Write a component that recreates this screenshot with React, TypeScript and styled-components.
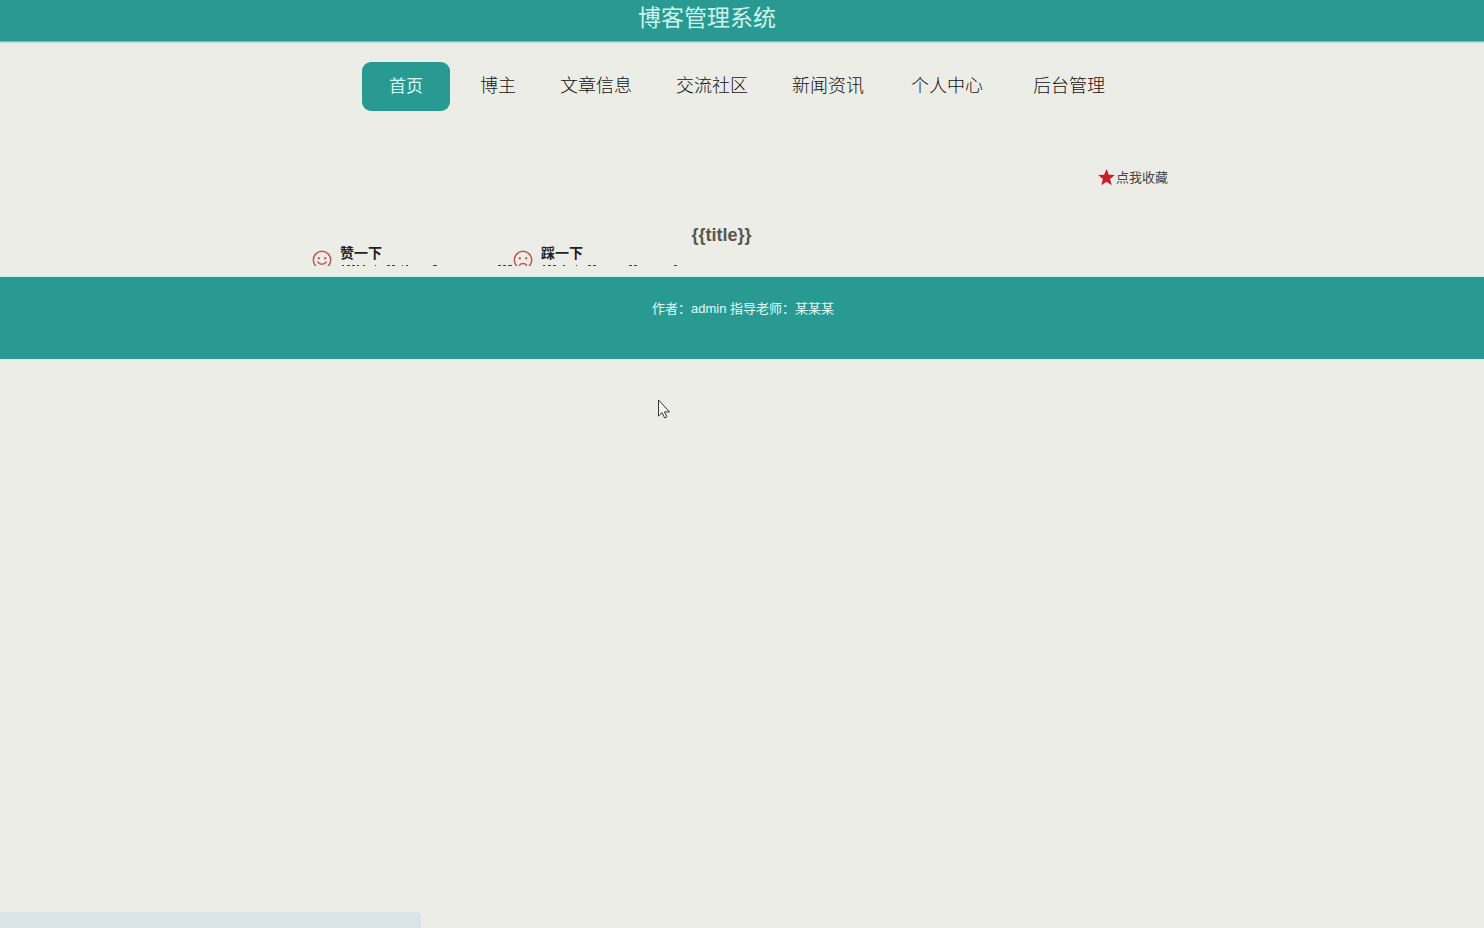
import React from "react";
import styled, { createGlobalStyle } from "styled-components";

const teal = "#299a92";
const sans = '"Liberation Sans", "Noto Sans CJK SC", sans-serif';

const GlobalStyle = createGlobalStyle`
  * { box-sizing: border-box; }
  body { margin: 0; background: #edede8; font-family: ${sans}; color: #222; }
`;
const Page = styled.div`
  min-height: 100vh;
  display: flex;
  flex-direction: column;
  overflow: hidden;
`;
const Header = styled.header`
  height: 42px;
  padding-right: 70px;
  background: ${teal};
  border-bottom: 1px solid #7fbab4;
  box-shadow: 0 1px 1px #c4dfda;
  text-align: center;
`;
const SiteName = styled.h1`
  margin: 0;
  font-size: 23px;
  line-height: 37px;
  font-weight: 400;
  color: #cdf5f0;
`;
const Nav = styled.nav`
  padding: 20px 0 0 8px;
`;
const Menu = styled.ul`
  display: flex;
  justify-content: center;
  margin: 0;
  padding: 0;
  list-style: none;
`;
const MenuItem = styled.li<{ $wide?: boolean; $first?: boolean }>`
  padding: ${(p) => (p.$first ? "0 8px 0 0" : p.$wide ? "0 25px" : "0 22px")};
`;
const MenuLink = styled.a<{ $active?: boolean }>`
  display: block;
  padding: ${(p) => (p.$active ? "0 27px" : "0")};
  border-radius: 9px;
  background: ${(p) => (p.$active ? teal : "transparent")};
  color: ${(p) => (p.$active ? "#d8f8f4" : "#111")};
  font-size: ${(p) => (p.$active ? 17 : 18)}px;
  font-weight: ${(p) => (p.$active ? 400 : 300)};
  line-height: 49px;
  text-decoration: none;
`;
const Article = styled.main`
  width: 100%;
  max-width: 860px;
  margin: 0 auto;
  padding-top: 55px;
`;
const Toolbar = styled.div`
  display: flex;
  justify-content: flex-end;
  padding-right: 4px;
`;
const Favourite = styled.button`
  display: flex;
  align-items: center;
  gap: 1px;
  padding: 0;
  border: 0;
  background: none;
  font-family: inherit;
  font-size: 13px;
  line-height: 24px;
  color: #444;
`;
const Title = styled.h2`
  margin: 0;
  padding: 35px 41px 0 0;
  text-align: center;
  font-size: 18px;
  line-height: 20px;
  color: #55584f;
`;
const Votes = styled.div`
  display: flex;
  height: 21px;
  margin-bottom: 11px;
  overflow: hidden;
`;
const Vote = styled.button`
  position: relative;
  display: flex;
  align-items: flex-start;
  gap: 8px;
  width: 201px;
  padding: 0;
  border: 0;
  background: none;
  font-family: inherit;
  font-size: 14px;
  font-weight: 700;
  line-height: 16px;
  color: #222;
`;
const Face = styled.svg`
  flex: none;
  margin-top: 5px;
`;
const Traces = styled.svg`
  position: absolute;
  left: 0;
  top: 20px;
`;
const Footer = styled.footer`
  height: 82px;
  padding: 20px 0 0 2px;
  background: ${teal};
  box-shadow: 0 -1px 1px #c9efea, 0 1px 1px #c9efea;
  color: #e4fbf8;
  text-align: center;
  font-size: 13px;
  line-height: 23px;
`;
const StatusBubble = styled.div`
  position: fixed;
  left: 0;
  bottom: 0;
  width: 421px;
  height: 16px;
  border-radius: 0 5px 0 0;
  background: #dbe4e9;
`;
const Pointer = styled.svg`
  position: fixed;
  left: 657px;
  top: 399px;
`;

const menu = [
  { label: "首页", active: true },
  { label: "博主" },
  { label: "文章信息" },
  { label: "交流社区" },
  { label: "新闻资讯" },
  { label: "个人中心", wide: true },
  { label: "后台管理", wide: true },
];

const FaceIcon = ({ happy }: { happy?: boolean }) => (
  <Face width="20" height="20" viewBox="0 0 20 20" fill="none" stroke="#c2575a" strokeWidth="1.5" strokeLinecap="round" aria-hidden="true">
    <circle cx="10" cy="10" r="8.7" />
    <path d={happy ? "M5.8 12c2 2.9 6.4 2.9 8.4 0" : "M6.5 15.2c1.6-2.2 5.4-2.2 7 0"} />
    <path d="M6.8 8.2v.3M13.2 8.2v.3" strokeWidth="2.2" />
  </Face>
);

const VoteButton = ({ label, happy, traces }: { label: string; happy?: boolean; traces: string }) => (
  <Vote type="button">
    <FaceIcon happy={happy} />
    {label}
    <Traces width="201" height="2" viewBox="0 0 201 2" stroke="#444" aria-hidden="true">
      <path d={traces} />
    </Traces>
  </Vote>
);

export default function App() {
  return (
    <Page>
      <GlobalStyle />
      <Header><SiteName>博客管理系统</SiteName></Header>
      <Nav>
        <Menu>
          {menu.map((m) => (
            <MenuItem key={m.label} $wide={m.wide} $first={m.active}>
              <MenuLink href="#" $active={m.active}>{m.label}</MenuLink>
            </MenuItem>
          ))}
        </Menu>
      </Nav>
      <Article>
        <Toolbar>
          <Favourite type="button">
            <svg width="17" height="18" viewBox="0 0 17 18" aria-hidden="true">
              <path fill="#c91d2c" d="M8.5 0l2.3 5.7 6 .4-4.7 3.9 1.6 6.2-5.2-3.4-5.2 3.4 1.6-6.2L.2 6.1l6-.4z" />
            </svg>
            点我收藏
          </Favourite>
        </Toolbar>
        <Title>{"{{title}}"}</Title>
        <Votes>
          <VoteButton label="赞一下" happy traces="M30 .5h2M35 .5h3M40 .5h3M45 .5h2M51 .5h2M63 .5h1M75 .5h3M80 .5h3M90 .5h1M94 .5h2M121 .5h4M186 .5h3M191 .5h3M196 .5h4" />
          <VoteButton label="踩一下" traces="M30 .5h2M35 .5h3M40 .5h3M50 .5h2M63 .5h1M75 .5h3M80 .5h3M116 .5h3M121 .5h3M161 .5h3" />
        </Votes>
      </Article>
      <Footer>作者：admin 指导老师：某某某</Footer>
      <StatusBubble />
      <Pointer width="14" height="22" viewBox="0 0 14 22" aria-hidden="true">
        <path d="M1.5 1v16l3.6-3.3 2.5 5.2 2.3-1-2.4-5h5z" fill="#f5f5f2" stroke="#333" />
      </Pointer>
    </Page>
  );
}
